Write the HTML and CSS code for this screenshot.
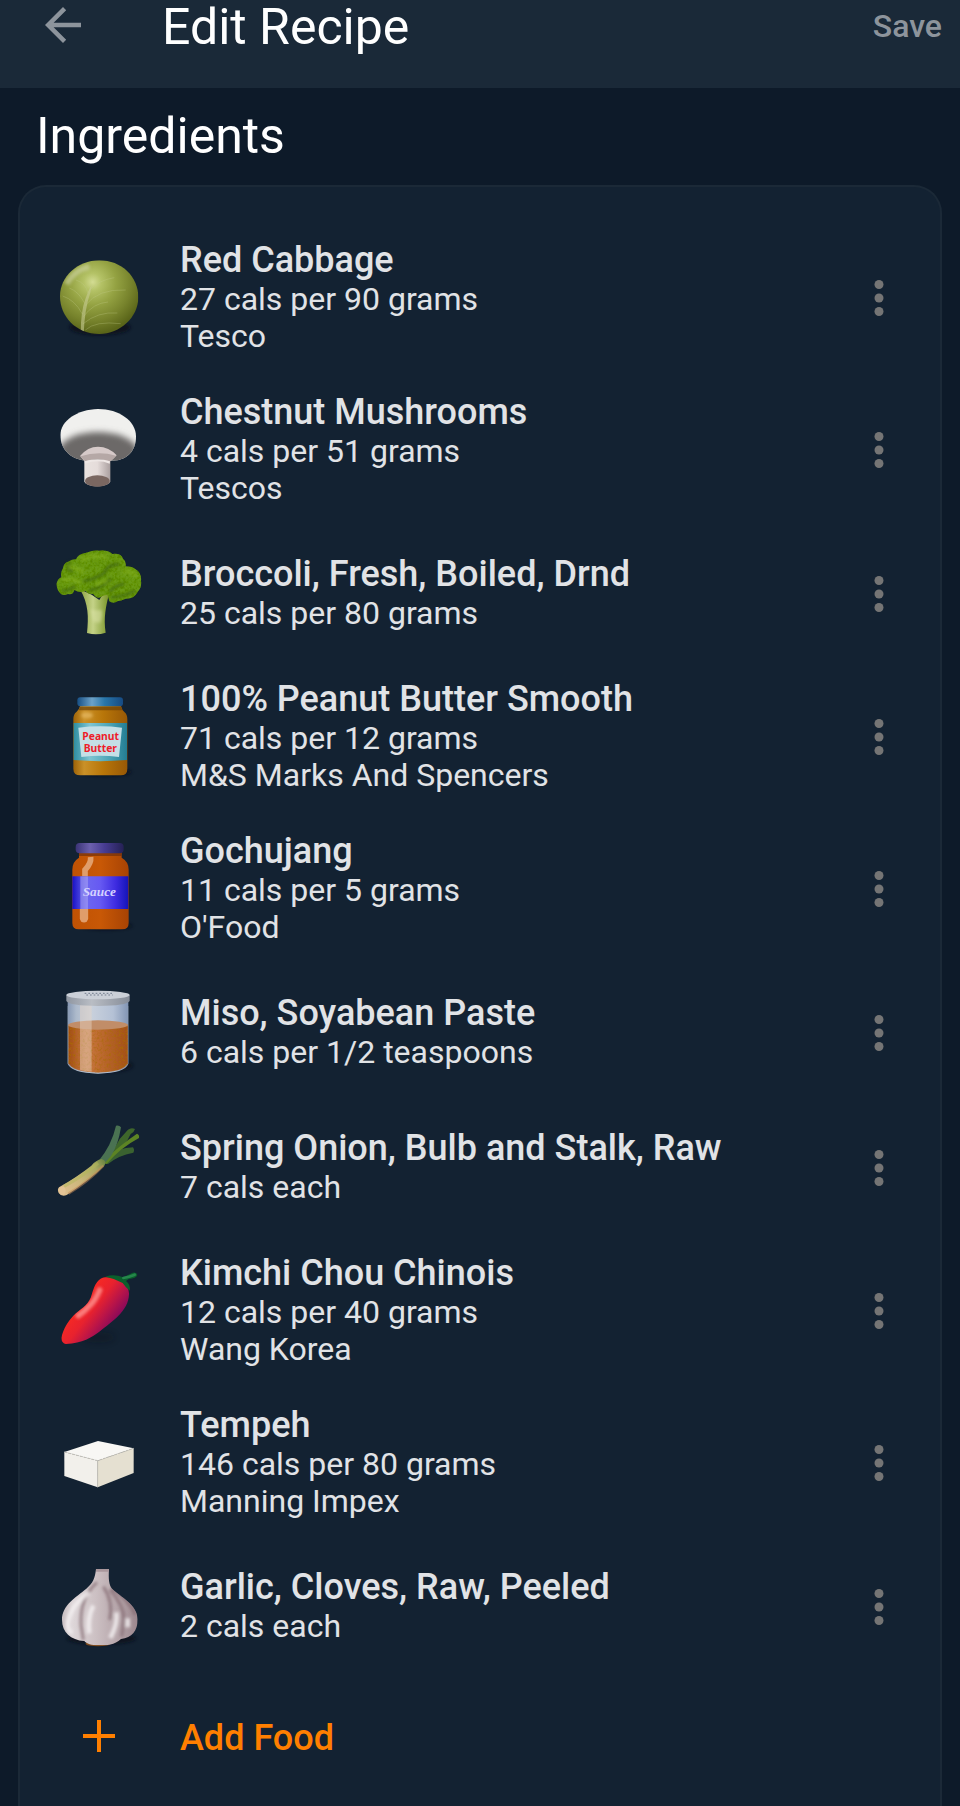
FILE: index.html
```html
<!DOCTYPE html>
<html lang="en">
<head>
<meta charset="utf-8">
<meta name="viewport" content="width=device-width, initial-scale=1">
<title>Edit Recipe</title>
<link rel="stylesheet" href="styles.css">
</head>
<body>
<svg class="defs" aria-hidden="true">
  <defs>
    <symbol id="dots" viewBox="0 0 40 40"><circle cx="20" cy="6.500" r="4.500"/><circle cx="20" cy="20" r="4.500"/><circle cx="20" cy="33.500" r="4.500"/></symbol>
    <filter id="soft2" x="-50%" y="-50%" width="200%" height="200%"><feGaussianBlur stdDeviation="2"/></filter>
    <filter id="soft5" x="-50%" y="-50%" width="200%" height="200%"><feGaussianBlur stdDeviation="5"/></filter>
    <filter id="soft9" x="-50%" y="-50%" width="200%" height="200%"><feGaussianBlur stdDeviation="9"/></filter>
    <filter id="leafy" x="0" y="0" width="100%" height="100%">
      <feTurbulence type="fractalNoise" baseFrequency="0.12" numOctaves="2" seed="4" result="n"/>
      <feColorMatrix in="n" type="matrix" values="0 0 0 0 0.1  0 0 0 0 0.25  0 0 0 0 0  2.6 0 0 0 -1.05" result="d"/>
      <feComposite in="d" in2="SourceGraphic" operator="in" result="s"/>
      <feMerge><feMergeNode in="SourceGraphic"/><feMergeNode in="s"/></feMerge>
    </filter>
    <filter id="grainy" x="0" y="0" width="100%" height="100%">
      <feTurbulence type="fractalNoise" baseFrequency="0.14" numOctaves="2" seed="8" result="n"/>
      <feColorMatrix in="n" type="matrix" values="0 0 0 0 0.4  0 0 0 0 0.15  0 0 0 0 0  2 0 0 0 -0.9" result="d"/>
      <feComposite in="d" in2="SourceGraphic" operator="in" result="s"/>
      <feMerge><feMergeNode in="SourceGraphic"/><feMergeNode in="s"/></feMerge>
    </filter>
    <radialGradient id="cab" gradientUnits="userSpaceOnUse" cx="158" cy="156" r="155"><stop offset="0" stop-color="#d3dc93"/><stop offset=".17" stop-color="#b4c266"/><stop offset=".45" stop-color="#94a242"/><stop offset=".75" stop-color="#77832c"/><stop offset="1" stop-color="#5a6519"/></radialGradient>
    <linearGradient id="stem" x1="0" x2="1"><stop offset="0" stop-color="#e9e2df"/><stop offset=".5" stop-color="#e5dcda"/><stop offset="1" stop-color="#aa9f9f"/></linearGradient>
    <linearGradient id="bstem" x1="0" x2="1"><stop offset="0" stop-color="#8ea343"/><stop offset=".45" stop-color="#c4d287"/><stop offset="1" stop-color="#779327"/></linearGradient>
    <linearGradient id="pb" x1="0" x2="1"><stop offset="0" stop-color="#9c6208"/><stop offset=".2" stop-color="#ca9128"/><stop offset=".55" stop-color="#b87609"/><stop offset="1" stop-color="#975806"/></linearGradient>
    <linearGradient id="pblid" x1="0" x2="1"><stop offset="0" stop-color="#174f84"/><stop offset=".32" stop-color="#6ca2c8"/><stop offset=".6" stop-color="#2876aa"/><stop offset="1" stop-color="#164a82"/></linearGradient>
    <linearGradient id="pblab" x1="0" x2="1"><stop offset="0" stop-color="#2e8da0"/><stop offset=".3" stop-color="#7fc5d1"/><stop offset=".65" stop-color="#4fa6b7"/><stop offset="1" stop-color="#237d93"/></linearGradient>
    <linearGradient id="sc" x1="0" x2="1"><stop offset="0" stop-color="#bf5204"/><stop offset=".5" stop-color="#c85806"/><stop offset="1" stop-color="#a74304"/></linearGradient>
    <linearGradient id="sclid" x1="0" x2="1"><stop offset="0" stop-color="#3a3375"/><stop offset=".3" stop-color="#6c60ad"/><stop offset=".6" stop-color="#473c91"/><stop offset="1" stop-color="#252155"/></linearGradient>
    <linearGradient id="sclab" x1="0" x2="1"><stop offset="0" stop-color="#1711c6"/><stop offset=".25" stop-color="#6d67f0"/><stop offset=".5" stop-color="#6659f2"/><stop offset=".78" stop-color="#3d2be0"/><stop offset="1" stop-color="#1414b8"/></linearGradient>
    <linearGradient id="glass" x1="0" x2="1"><stop offset="0" stop-color="#8597b3"/><stop offset=".14" stop-color="#adbacb"/><stop offset=".4" stop-color="#c8d0dc"/><stop offset=".75" stop-color="#b4c1d5"/><stop offset="1" stop-color="#8295b4"/></linearGradient>
    <linearGradient id="spice" x1="0" x2="1"><stop offset="0" stop-color="#a14c14"/><stop offset=".3" stop-color="#c97a42"/><stop offset=".5" stop-color="#bf6c32"/><stop offset="1" stop-color="#a35019"/></linearGradient>
    <linearGradient id="lid" x1="0" x2="1"><stop offset="0" stop-color="#8f96a1"/><stop offset=".4" stop-color="#b9bdc4"/><stop offset="1" stop-color="#868d99"/></linearGradient>
    <linearGradient id="leek" gradientUnits="userSpaceOnUse" x1="60" y1="240" x2="200" y2="145"><stop offset="0" stop-color="#dfbf8f"/><stop offset=".4" stop-color="#cbb77b"/><stop offset=".75" stop-color="#a8a862"/><stop offset="1" stop-color="#5e7d3a"/></linearGradient>
    <linearGradient id="chili" gradientUnits="userSpaceOnUse" x1="115" y1="135" x2="220" y2="215"><stop offset="0" stop-color="#fa2b21"/><stop offset=".4" stop-color="#e8222e"/><stop offset=".7" stop-color="#b81449"/><stop offset="1" stop-color="#84085c"/></linearGradient>
    <linearGradient id="gar" x1="0" x2="1"><stop offset="0" stop-color="#c4babd"/><stop offset=".16" stop-color="#ddd6d8"/><stop offset=".45" stop-color="#ccc0c3"/><stop offset=".75" stop-color="#b3a2a7"/><stop offset="1" stop-color="#98838a"/></linearGradient>
    <clipPath id="cabclip"><path d="M60 199C60 140 112 92 178 91C244 91 295 140 295 202C295 262 240 312 178 312C108 312 60 260 60 199Z"/></clipPath>
    <clipPath id="capclip"><path d="M61 615C61 573 112 538 174 537C238 537 287 573 288 618C289 665 258 691 220 692H140C96 690 61 661 61 615Z"/></clipPath>
    <clipPath id="garclip"><path d="M168 42H207C205 72 207 90 216 101C240 125 293 148 293 193C293 228 276 249 243 252C224 270 200 271 176 271C155 271 139 266 133 258C92 255 66 232 66 194C66 150 108 127 139 101C159 84 165 70 168 42Z"/></clipPath>
    <clipPath id="chiliclip"><path d="M196 69C235 66 269 87 267 120C266 171 213 204 180 231C155 250 128 267 78 269C68 267 64 259 64 250C71 221 84 201 100 184C121 163 140 158 153 128C161 105 167 72 196 69Z"/></clipPath>
  </defs>
</svg>

<header class="topbar">
  <button class="back" type="button" aria-label="Back">
    <svg viewBox="0 0 24 24" aria-hidden="true"><path d="M20 11H7.830l5.590-5.590L12 4l-8 8 8 8 1.410-1.410L7.830 13H20z"/></svg>
  </button>
  <h1 class="topbar-title">Edit Recipe</h1>
  <button class="save" type="button">Save</button>
</header>

<main class="content">
  <h2 class="section-title">Ingredients</h2>
  <section class="card">
    <ul class="list">
      <li class="item">
        <svg class="food" viewBox="0 24 360 360" aria-hidden="true">
          <ellipse cx="180" cy="292" rx="92" ry="24" fill="#071019" opacity=".7" filter="url(#soft5)"/>
          <g clip-path="url(#cabclip)">
            <rect x="50" y="80" width="260" height="240" fill="url(#cab)"/>
            <path d="M80 162Q102 120 148 110" stroke="#d4d9ae" stroke-width="17" fill="none" opacity=".55" filter="url(#soft5)"/>
            <path d="M122 312Q122 245 136 207Q144 182 156 163L151 188Q134 235 131 312Z" fill="#c6cc92" opacity=".6"/>
            <g fill="none" stroke="#c4cc8a" stroke-width="3" opacity=".3"><path d="M127 252Q105 210 68 198M133 218Q116 185 88 174M144 190Q138 160 108 150M130 260Q160 219 204 216M128 282Q174 244 232 249M136 300Q166 272 242 281M136 226Q174 176 257 180M148 182Q175 150 223 143"/></g>
          </g>
        </svg>
        <div class="info"><h3>Red Cabbage</h3><p>27 cals per 90 grams</p><p>Tesco</p></div>
        <button class="more" type="button" aria-label="Options for Red Cabbage"><svg aria-hidden="true"><use href="#dots"/></svg></button>
      </li>
      <li class="item">
        <svg class="food" viewBox="0 480 360 360" aria-hidden="true">
          <g clip-path="url(#capclip)">
            <rect x="55" y="530" width="240" height="170" fill="#f0f0ee"/>
            <path d="M58 650Q90 608 174 606Q258 608 292 650V710H58Z" fill="#6c6968" filter="url(#soft9)"/>
          </g>
          <path d="M133 690H211V754C207 774 137 774 133 754Z" fill="url(#stem)"/>
          <path d="M120 678Q143 650 174 650Q207 650 230 676Q216 691 210 694Q174 680 134 694Z" fill="#d6cac9"/>
          <path d="M122 679Q174 662 228 677Q216 691 209 694Q174 681 135 694Z" fill="#b5a8a6"/>
          <path d="M134 694Q174 681 210 694L209 701Q174 687 135 701Z" fill="#eee7e5"/>
          <ellipse cx="172" cy="753" rx="37" ry="17" fill="#7a6761"/>
        </svg>
        <div class="info"><h3>Chestnut Mushrooms</h3><p>4 cals per 51 grams</p><p>Tescos</p></div>
        <button class="more" type="button" aria-label="Options for Chestnut Mushrooms"><svg aria-hidden="true"><use href="#dots"/></svg></button>
      </li>
      <li class="item">
        <svg class="food" viewBox="0 10 360 360" aria-hidden="true">
          <path d="M120 176L155 192L178 208L190 188L207 190C198 225 190 262 197 306Q170 315 141 307C146 260 146 220 120 176Z" fill="url(#bstem)"/>
          <path d="M150 235Q166 242 185 237Q190 255 180 277L160 273Z" fill="#dce3a9" opacity=".55" filter="url(#soft5)"/>
          <g filter="url(#leafy)"><path d="M50 158Q53 145 64 140Q61 124 69 113Q70 98 84 93Q96 86 108 86Q113 70 139 66Q162 57 180 60Q204 58 217 70Q244 67 249 84Q260 92 257 107Q278 108 286 115Q306 127 303 151Q306 171 292 185Q283 205 257 204Q242 211 232 212Q220 220 208 212L203 193Q188 192 182 200Q168 204 160 190Q143 191 137 181Q119 188 103 178Q99 194 84 190Q72 196 64 191Q49 178 50 158Z" fill="#6b9b18"/></g>
          <g fill="none" stroke="#2f5108" stroke-width="10" opacity=".5" filter="url(#soft5)"><path d="M91 94Q72 116 99 122M130 152Q160 147 194 127Q195 105 238 100M146 180Q188 172 213 144M208 184Q230 161 253 160M212 200Q251 198 286 180M66 180Q90 180 106 166"/></g>
          <g fill="none" stroke="#9bc52c" stroke-width="12" opacity=".35" filter="url(#soft5)"><path d="M120 88Q162 70 202 80M84 108Q108 110 130 126M248 125Q275 116 290 139M67 151Q97 138 121 158M166 163Q188 150 206 153"/></g>
        </svg>
        <div class="info"><h3>Broccoli, Fresh, Boiled, Drnd</h3><p>25 cals per 80 grams</p></div>
        <button class="more" type="button" aria-label="Options for Broccoli"><svg aria-hidden="true"><use href="#dots"/></svg></button>
      </li>
      <li class="item">
        <svg class="food" viewBox="0 -9 360 360" aria-hidden="true">
          <ellipse cx="195" cy="276" rx="80" ry="14" fill="#071019" opacity=".6" filter="url(#soft5)"/>
          <path d="M120 78H243Q246 90 253 96Q262 103 262 118V266Q262 286 242 286H121Q100 286 100 266V118Q100 101 110 95Q118 88 120 78Z" fill="url(#pb)"/>
          <path d="M120 80H243L247 91H116Z" fill="#6e4309" opacity=".7"/>
          <ellipse cx="141" cy="106" rx="18" ry="9" fill="#e8bc67" opacity=".7" filter="url(#soft5)"/>
          <path d="M131 250V275" stroke="#ecc06c" stroke-width="13" opacity=".6" filter="url(#soft5)"/>
          <rect x="112" y="52" width="137" height="27" rx="9" fill="url(#pblid)"/>
          <path d="M101 129H261V240Q180 247 101 240Z" fill="url(#pblab)"/>
          <path d="M115 143Q181 135 246 143L237 231Q181 224 124 231Z" fill="#c4dfe6"/>
          <g class="peanut-label"><text x="182" y="181">Peanut</text><text x="181" y="215">Butter</text></g>
        </svg>
        <div class="info"><h3>100% Peanut Butter Smooth</h3><p>71 cals per 12 grams</p><p>M&amp;S Marks And Spencers</p></div>
        <button class="more" type="button" aria-label="Options for 100% Peanut Butter Smooth"><svg aria-hidden="true"><use href="#dots"/></svg></button>
      </li>
      <li class="item">
        <svg class="food" viewBox="0 0 360 360" aria-hidden="true">
          <ellipse cx="198" cy="290" rx="80" ry="14" fill="#071019" opacity=".6" filter="url(#soft5)"/>
          <path d="M117 68H245V86Q266 98 266 122V282Q266 301 247 301H116Q97 301 97 282V122Q97 98 117 86Z" fill="url(#sc)"/>
          <path d="M117 70H245V81H117Z" fill="#72310b" opacity=".7"/>
          <path d="M152 84Q154 103 135 123V142" fill="none" stroke="#eab68d" stroke-width="17" opacity=".75" filter="url(#soft2)"/>
          <path d="M132 236V268" stroke="#eab68d" stroke-width="25" stroke-linecap="round" opacity=".75"/>
          <rect x="107" y="42" width="144" height="31" rx="12" fill="url(#sclid)"/>
          <path d="M97 142H265V240H97Z" fill="url(#sclab)"/>
          <path d="M121 142H144V240H121Z" fill="#aaa5f5" opacity=".55" filter="url(#soft2)"/>
          <text class="sauce-label" x="178" y="201">Sauce</text>
        </svg>
        <div class="info"><h3>Gochujang</h3><p>11 cals per 5 grams</p><p>O'Food</p></div>
        <button class="more" type="button" aria-label="Options for Gochujang"><svg aria-hidden="true"><use href="#dots"/></svg></button>
      </li>
      <li class="item">
        <svg class="food" viewBox="0 7 360 360" aria-hidden="true">
          <ellipse cx="207" cy="285" rx="73" ry="20" fill="#071019" opacity=".6" filter="url(#soft5)"/>
          <path d="M83 85H265V280Q255 307 174 309Q96 307 83 280Z" fill="url(#glass)"/>
          <g filter="url(#grainy)"><path d="M85 162H264V278Q254 304 174 306Q97 304 85 278Z" fill="url(#spice)"/></g>
          <ellipse cx="174" cy="163" rx="90" ry="14" fill="#c18d68"/>
          <path d="M120 98H155V303Q132 301 120 297Z" fill="#e9d7c8" opacity=".45"/>
          <path d="M79 73V91Q87 105 174 106Q261 105 269 91V73Z" fill="url(#lid)"/>
          <ellipse cx="174" cy="73" rx="95" ry="13" fill="#cbd0d8"/>
          <path d="M134 68H222M139 73H218" stroke="#747e8f" stroke-width="3" stroke-dasharray="5 6"/>
          <path d="M84 106V278Q98 305 174 307Q252 305 264 278V106" fill="none" stroke="#9eabbc" stroke-width="3" opacity=".4"/>
        </svg>
        <div class="info"><h3>Miso, Soyabean Paste</h3><p>6 cals per 1/2 teaspoons</p></div>
        <button class="more" type="button" aria-label="Options for Miso, Soyabean Paste"><svg aria-hidden="true"><use href="#dots"/></svg></button>
      </li>
      <li class="item">
        <svg class="food" viewBox="0 -8 360 360" aria-hidden="true">
          <path d="M190 158L207 133Q234 113 279 110Q285 119 280 126Q235 134 204 160Z" fill="#3a6230"/>
          <path d="M192 148Q226 112 239 85L264 57Q274 49 285 55Q283 64 272 70Q256 108 207 149Z" fill="#3e662b"/>
          <path d="M187 155Q233 108 291 69Q299 72 297 82Q240 112 200 160Z" fill="#5c8424"/>
          <path d="M228 45Q238 43 243 50Q235 102 213 136L194 158L174 153Q215 104 228 45Z" fill="#4a7252"/>
          <path d="M57 230Q111 199 154 165Q168 148 185 145Q203 151 193 165Q150 207 80 253Q66 260 56 247Q51 237 57 230Z" fill="url(#leek)"/>
          <path d="M72 227Q133 194 174 157" fill="none" stroke="#b3b95a" stroke-width="10" opacity=".5" filter="url(#soft2)"/>
          <path d="M85 249Q145 213 190 165" fill="none" stroke="#c68c58" stroke-width="8" opacity=".5" filter="url(#soft2)"/>
          <ellipse cx="67" cy="240" rx="10" ry="12" fill="#e5c698" opacity=".8"/>
        </svg>
        <div class="info"><h3>Spring Onion, Bulb and Stalk, Raw</h3><p>7 cals each</p></div>
        <button class="more" type="button" aria-label="Options for Spring Onion"><svg aria-hidden="true"><use href="#dots"/></svg></button>
      </li>
      <li class="item">
        <svg class="food" viewBox="0 -10 360 360" aria-hidden="true">
          <ellipse cx="176" cy="249" rx="48" ry="17" fill="#071019" opacity=".3" filter="url(#soft9)"/>
          <g clip-path="url(#chiliclip)"><rect x="60" y="60" width="215" height="215" fill="url(#chili)"/>
            <path d="M179 107Q165 141 143 160Q131 173 115 184" stroke="#ff9b98" stroke-width="17" stroke-linecap="round" fill="none" opacity=".75" filter="url(#soft5)"/>
          </g>
          <path d="M196 67Q222 58 250 69L278 55Q290 52 292 62Q289 72 266 74L258 80Q273 92 269 109Q256 98 248 86Q224 72 196 67Z" fill="#0a5f2c"/>
          <path d="M250 71Q267 68 284 61" fill="none" stroke="#26864c" stroke-width="8" stroke-linecap="round"/>
        </svg>
        <div class="info"><h3>Kimchi Chou Chinois</h3><p>12 cals per 40 grams</p><p>Wang Korea</p></div>
        <button class="more" type="button" aria-label="Options for Kimchi Chou Chinois"><svg aria-hidden="true"><use href="#dots"/></svg></button>
      </li>
      <li class="item">
        <svg class="food" viewBox="0 -50 360 360" aria-hidden="true">
          <path d="M73 97L174 64L281 86L173 123Z" fill="#f8f7f4"/>
          <path d="M73 97L173 123V203L73 169Z" fill="#f2f0eb"/>
          <path d="M173 123L281 86V160L173 203Z" fill="#e5e0d1"/>
          <path d="M73 97L173 123L281 86" fill="none" stroke="#c3c0b8" stroke-width="3" stroke-dasharray="8 4"/>
          <path d="M173 124V203" stroke="#c6c1b8" stroke-width="2"/>
        </svg>
        <div class="info"><h3>Tempeh</h3><p>146 cals per 80 grams</p><p>Manning Impex</p></div>
        <button class="more" type="button" aria-label="Options for Tempeh"><svg aria-hidden="true"><use href="#dots"/></svg></button>
      </li>
      <li class="item">
        <svg class="food" viewBox="0 -24 360 360" aria-hidden="true">
          <ellipse cx="184" cy="251" rx="104" ry="18" fill="#071019" opacity=".65" filter="url(#soft5)"/>
          <ellipse cx="174" cy="266" rx="37" ry="8" fill="#7d4a1c"/>
          <g clip-path="url(#garclip)">
            <rect x="60" y="38" width="240" height="240" fill="url(#gar)"/>
            <g fill="none" filter="url(#soft5)">
              <path d="M171 82Q119 127 123 210L130 255M190 95Q221 140 209 195M210 105Q252 150 252 195L245 245M214 98Q272 139 286 180" stroke="#80666d" stroke-width="9" opacity=".7"/>
              <path d="M147 113Q92 150 84 204Q82 225 96 235M160 152Q141 187 148 235M229 172Q234 205 211 249M263 190V217" stroke="#f5f1f2" stroke-width="14" opacity=".8"/>
            </g>
            <path d="M168 42H207V50H168Z" fill="#aa979c"/>
          </g>
        </svg>
        <div class="info"><h3>Garlic, Cloves, Raw, Peeled</h3><p>2 cals each</p></div>
        <button class="more" type="button" aria-label="Options for Garlic"><svg aria-hidden="true"><use href="#dots"/></svg></button>
      </li>
    </ul>
    <button class="add" type="button">
      <span class="add-icon"><svg viewBox="0 0 32 32" aria-hidden="true"><path d="M16 0V32M0 16H32"/></svg></span>
      <span>Add Food</span>
    </button>
  </section>
</main>
</body>
</html>
```
FILE: styles.css
```css
* { box-sizing: border-box; }

body {
  margin: 0;
  min-height: 100vh;
  display: flex;
  flex-direction: column;
  background: #0d1a29;
  color: #e1e3e6;
  font-family: Roboto, "Liberation Sans", sans-serif;
}

h1, h2, h3, p, ul { margin: 0; padding: 0; }

button {
  border: 0;
  padding: 0;
  background: none;
  font: inherit;
  cursor: pointer;
}

.defs {
  position: absolute;
  width: 0;
  height: 0;
}

.topbar {
  display: flex;
  align-items: center;
  height: 88px;
  padding: 0 18px 38px 36px;
  background: #1a2938;
}

.back { width: 54px; height: 54px; }
.back svg { display: block; fill: #8d949c; }

.topbar-title {
  flex: 1;
  margin-left: 72px;
  padding-top: 4px;
  color: #fff;
  font-size: 50px;
  font-weight: 400;
  line-height: 50px;
}

.save {
  padding-top: 2px;
  color: #8d949c;
  font-size: 32px;
  font-weight: 500;
  line-height: 38px;
}

.content {
  flex: 1;
  display: flex;
  flex-direction: column;
  padding: 0 18px;
}

.section-title {
  padding: 18px 18px 19px;
  color: #fff;
  font-size: 50px;
  font-weight: 400;
  line-height: 60px;
}

.card {
  flex: 1;
  padding: 35px 21px 36px 20px;
  border: 2px solid #1b2937;
  border-bottom: 0;
  border-radius: 28px 28px 0 0;
  background: #132232;
}

.list { list-style: none; }

.item {
  display: flex;
  align-items: center;
  min-height: 135px;
}

.food {
  flex: none;
  width: 120px;
  height: 120px;
}

.info {
  flex: 1;
  padding: 17px 0 19px 20px;
}

.info h3 {
  font-size: 36px;
  font-weight: 500;
  line-height: 42px;
}

.info p {
  font-size: 32px;
  line-height: 37px;
}

.more {
  flex: none;
  display: grid;
  place-items: center;
  width: 80px;
  height: 80px;
}

.more svg { width: 40px; height: 40px; fill: #757575; }

.add {
  display: flex;
  align-items: center;
  width: 100%;
  min-height: 124px;
  color: #ff7f00;
  font-size: 36px;
  font-weight: 500;
  line-height: 42px;
}

.add span + span { padding-top: 3px; }

.add-icon {
  display: grid;
  place-items: center;
  width: 118px;
  margin-right: 22px;
}

.add-icon svg {
  width: 32px;
  height: 32px;
  stroke: #ff7f00;
  stroke-width: 4;
}

.peanut-label {
  fill: #ee1c2a;
  font: 700 31px "Noto Sans", sans-serif;
  text-anchor: middle;
}

.sauce-label {
  fill: #d5d2ff;
  font: italic 700 40px "Liberation Serif", serif;
  text-anchor: middle;
}
```
